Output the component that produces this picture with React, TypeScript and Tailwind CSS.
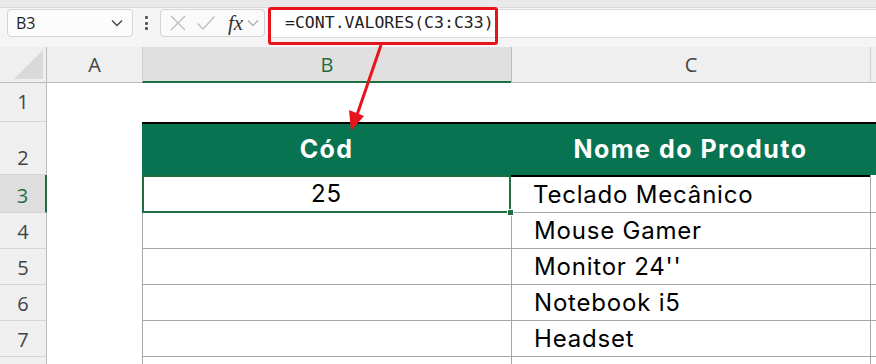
import React from "react";

const hdrFont = { fontFamily: '"Open Sans", "Noto Sans", sans-serif' };
const cellFont = { fontFamily: 'Inter, "Noto Sans", sans-serif' };

const items = ["Mouse Gamer", "Monitor 24''", "Notebook i5", "Headset"];

function RowHdr({ n, h, sel, pb }: { n: string; h: string; sel?: boolean; pb: string }) {
  return (
    <div
      className={`flex items-end justify-center border-b border-[#d6d6d6] text-[20px] leading-none ${h} ${pb} ${
        sel
          ? "bg-[#dedede] text-[#1d6f42] border-r-2 border-r-[#1d6f42]"
          : "bg-[#efefef] text-[#444] border-r border-r-[#bcbcbc]"
      }`}
      style={hdrFont}
    >
      {n}
    </div>
  );
}

export default function App() {
  return (
    <div className="relative w-[876px] h-[364px] overflow-hidden bg-white">
      {/* top strip */}
      <div className="h-[8px] bg-[#e9e9e9] border-b border-[#dadada]" />
      {/* formula bar */}
      <div className="h-[39px] bg-[#f5f5f5] flex items-start pt-[1px]">
        <div className="ml-[7px] w-[126px] h-[28px] rounded-[4px] border border-[#d4d4d4] bg-[#fcfcfc] flex items-center justify-between pl-[8px] pr-[9px]">
          <span className="text-[16px] text-[#222]" style={hdrFont}>
            B3
          </span>
          <svg width="12" height="8" viewBox="0 0 12 8">
            <path d="M1 1.5 L6 6.5 L11 1.5" fill="none" stroke="#444" strokeWidth="1.4" />
          </svg>
        </div>
        <div className="w-[27px] h-[28px] flex flex-col items-center justify-center gap-[2.5px]">
          <div className="w-[3px] h-[3px] bg-[#555] rounded-[1px]" />
          <div className="w-[3px] h-[3px] bg-[#555] rounded-[1px]" />
          <div className="w-[3px] h-[3px] bg-[#555] rounded-[1px]" />
        </div>
        <div className="w-[105px] h-[28px] rounded-[4px] border border-[#d4d4d4] bg-[#fafafa] flex items-center pl-[8px]">
          <svg width="18" height="18" viewBox="0 0 18 18">
            <path d="M2 2 L16 16 M16 2 L2 16" stroke="#bdbdbd" strokeWidth="1.3" fill="none" />
          </svg>
          <svg width="20" height="18" viewBox="0 0 20 18" className="ml-[9px]">
            <path d="M1.5 9.5 L7 15 L18.5 2.5" stroke="#bdbdbd" strokeWidth="1.3" fill="none" />
          </svg>
          <span
            className="ml-[12px] text-[21px] italic leading-none text-[#333]"
            style={{ fontFamily: '"Liberation Serif", "DejaVu Serif", serif' }}
          >
            fx
          </span>
          <svg width="12" height="8" viewBox="0 0 12 8" className="ml-[4px]">
            <path d="M1 1.5 L6 6.5 L11 1.5" fill="none" stroke="#aaa" strokeWidth="1.2" />
          </svg>
        </div>
        <div className="ml-[3px] flex-1 h-[29px] bg-white border-y border-l border-[#dcdcdc] rounded-l-[3px] flex items-center pl-[16px]">
          <span
            className="text-[16.5px] text-[#222] leading-none"
            style={{ fontFamily: '"DejaVu Sans Mono", "Liberation Mono", monospace' }}
          >
            =CONT.VALORES(C3:C33)
          </span>
        </div>
      </div>

      {/* sheet grid */}
      <div className="grid grid-cols-[47px_95px_369px_359px_6px]">
        {/* column headers */}
        <div className="h-[36px] bg-[#efefef] border-b border-r border-[#bcbcbc] relative">
          <svg width="30" height="30" viewBox="0 0 30 30" className="absolute left-[14px] top-[3px]">
            <path d="M29 0 L29 29 L0 29 Z" fill="#d9d9d9" />
          </svg>
        </div>
        <div
          className="h-[36px] bg-[#efefef] border-b border-[#bcbcbc] flex items-end justify-center pb-[7px] text-[20px] leading-none text-[#444]"
          style={hdrFont}
        >
          A
        </div>
        <div
          className="h-[36px] bg-[#e0e0e0] border-b-2 border-b-[#1d6f42] border-l border-l-[#cfcfcf] flex items-end justify-center pb-[6px] text-[20px] leading-none text-[#1d6f42]"
          style={hdrFont}
        >
          B
        </div>
        <div
          className="h-[36px] bg-[#efefef] border-b border-[#bcbcbc] border-l border-l-[#bcbcbc] flex items-end justify-center pb-[7px] text-[20px] leading-none text-[#444]"
          style={hdrFont}
        >
          C
        </div>
        <div className="h-[36px] bg-[#efefef] border-b border-[#bcbcbc] border-l border-l-[#cfcfcf]" />

        {/* row 1 */}
        <RowHdr n="1" h="h-[39px]" pb="pb-[9px]" />
        <div className="h-[39px]" />
        <div className="h-[39px]" />
        <div className="h-[39px]" />
        <div className="h-[39px]" />

        {/* row 2 */}
        <RowHdr n="2" h="h-[53px]" pb="pb-[6px]" />
        <div className="h-[53px]" />
        <div
          className="h-[53px] bg-[#077350] border-t-2 border-black flex items-center justify-center pt-[1px] text-[25px] font-bold tracking-[1.3px] text-white"
          style={cellFont}
        >
          Cód
        </div>
        <div
          className="h-[53px] bg-[#077350] border-t-2 border-black flex items-center justify-center pt-[1px] text-[25px] font-bold tracking-[1.5px] text-white"
          style={cellFont}
        >
          Nome do Produto
        </div>
        <div className="h-[53px] bg-[#077350] border-t-2 border-black" />

        {/* row 3 */}
        <RowHdr n="3" h="h-[38px]" pb="pb-[6px]" sel />
        <div className="h-[38px]" />
        <div
          className="relative h-[38px] border-2 border-[#1d6f42] flex items-center justify-center text-[24px] tracking-[0.8px] text-black"
          style={cellFont}
        >
          25
          <div className="absolute right-[-5px] bottom-[-5px] w-[7px] h-[7px] bg-[#1d6f42] border border-white" />
        </div>
        <div
          className="h-[38px] border-t-2 border-t-black border-b border-b-[#a6a6a6] flex items-center pl-[22px] text-[24px] tracking-[0.8px] text-black"
          style={cellFont}
        >
          Teclado Mecânico
        </div>
        <div className="h-[38px] border-l border-[#a6a6a6] border-b border-b-[#a6a6a6]" />

        {items.map((t, i) => (
          <React.Fragment key={t}>
            <RowHdr n={String(i + 4)} h="h-[36px]" pb="pb-[6px]" />
            <div className="h-[36px]" />
            <div className="h-[36px] border-l border-b border-[#a6a6a6]" />
            <div
              className="h-[36px] border-l border-b border-[#a6a6a6] flex items-center pl-[22px] text-[24px] tracking-[0.8px] text-black"
              style={cellFont}
            >
              {t}
            </div>
            <div className="h-[36px] border-l border-b border-[#a6a6a6]" />
          </React.Fragment>
        ))}

        <div className="h-[36px] bg-[#efefef] border-r border-[#bcbcbc]" />
        <div className="h-[36px]" />
        <div className="h-[36px] border-l border-[#a6a6a6]" />
        <div className="h-[36px] border-l border-[#a6a6a6]" />
        <div className="h-[36px] border-l border-[#a6a6a6]" />
      </div>

      {/* annotation: red box + arrow */}
      <div className="absolute left-[268px] top-[7px] w-[230px] h-[38px] border-[3px] border-[#e8141c] rounded-[3px]" />
      <svg className="absolute left-0 top-0 pointer-events-none" width="876" height="364">
        <line x1="381" y1="45" x2="357" y2="115" stroke="#e8141c" strokeWidth="3" />
        <path d="M351 131 L349 110 L364 116 Z" fill="#e8141c" />
      </svg>
    </div>
  );
}
